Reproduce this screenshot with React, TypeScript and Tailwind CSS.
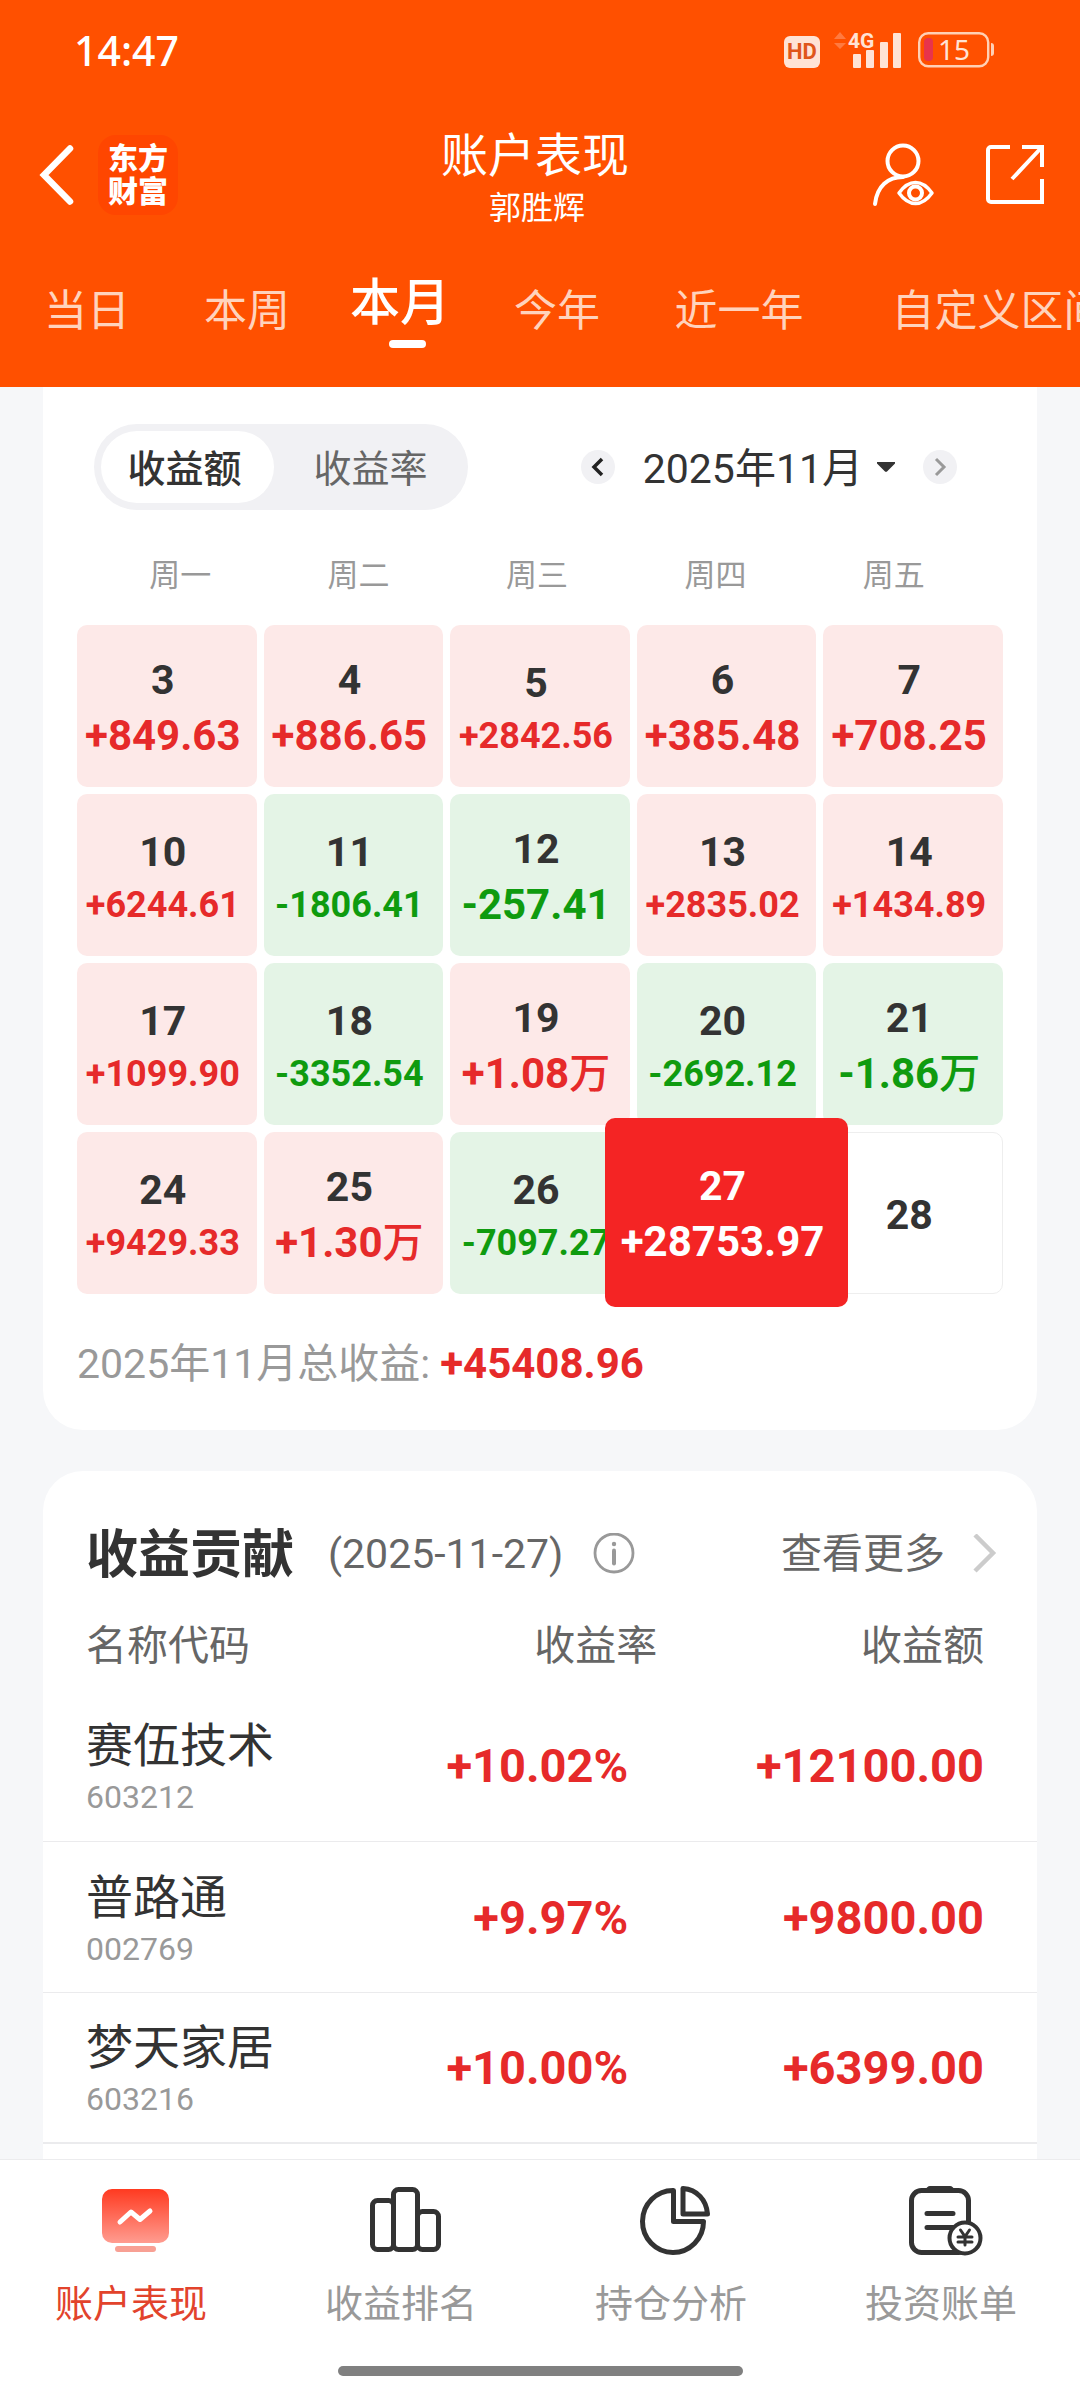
import React from "react";

type Tone = "up" | "down" | "none" | "selected";

interface Day {
  day: number;
  value?: string;
  unit?: string;
  tone: Tone;
}

const tabs = [
  { label: "当日", width: "w-[160px]" },
  { label: "本周", width: "w-[160px]" },
  { label: "本月", width: "w-[160px]", active: true },
  { label: "今年", width: "w-[140px]" },
  { label: "近一年", width: "w-[224px]" },
  { label: "自定义区间", width: "w-[296px]" },
];

const weekdays = ["周一", "周二", "周三", "周四", "周五"];

const days: Day[] = [
  { day: 3, value: "+849.63", tone: "up" },
  { day: 4, value: "+886.65", tone: "up" },
  { day: 5, value: "+2842.56", tone: "up" },
  { day: 6, value: "+385.48", tone: "up" },
  { day: 7, value: "+708.25", tone: "up" },
  { day: 10, value: "+6244.61", tone: "up" },
  { day: 11, value: "-1806.41", tone: "down" },
  { day: 12, value: "-257.41", tone: "down" },
  { day: 13, value: "+2835.02", tone: "up" },
  { day: 14, value: "+1434.89", tone: "up" },
  { day: 17, value: "+1099.90", tone: "up" },
  { day: 18, value: "-3352.54", tone: "down" },
  { day: 19, value: "+1.08", unit: "万", tone: "up" },
  { day: 20, value: "-2692.12", tone: "down" },
  { day: 21, value: "-1.86", unit: "万", tone: "down" },
  { day: 24, value: "+9429.33", tone: "up" },
  { day: 25, value: "+1.30", unit: "万", tone: "up" },
  { day: 26, value: "-7097.27", tone: "down" },
  { day: 27, value: "+28753.97", tone: "selected" },
  { day: 28, tone: "none" },
];

const stocks = [
  { name: "赛伍技术", code: "603212", rate: "+10.02%", amount: "+12100.00" },
  { name: "普路通", code: "002769", rate: "+9.97%", amount: "+9800.00" },
  { name: "梦天家居", code: "603216", rate: "+10.00%", amount: "+6399.00" },
];

const toneClass: Record<Tone, string> = {
  up: "bg-[#fde9e8] text-[#e62a2a]",
  down: "bg-[#e4f4e6] text-[#0f9b0f]",
  none: "border border-[#eeeeee] bg-white text-[#333333]",
  selected: "bg-[#f42424] text-white",
};

function StatusBar() {
  return (
    <div className="flex h-[100px] items-center justify-between pr-[86px] pl-[74px]">
      <span className="font-['Noto_Sans',sans-serif] text-[41px] leading-[48px] font-medium">14:47</span>
      <div className="flex items-center">
        <span className="mt-1 flex h-8 w-9 items-center justify-center rounded-md bg-[#ffe3d5] text-[22px] leading-8 font-bold text-[#e0561a]">
          HD
        </span>
        <svg className="ml-3.5 h-[38px] w-[68px] overflow-visible" viewBox="0 0 68 38" aria-hidden="true">
          <path d="M6 1l6 7H0zM6 18l6-6H0z" fill="#ff7a40" />
          <text x="14" y="17" fontSize="21" fontWeight="700" fontFamily="Roboto" fill="#ffe3d5">4G</text>
          <g fill="#ffe3d5">
            <rect x="19" y="23" width="8" height="14" rx="1" />
            <rect x="32" y="19" width="8" height="18" rx="1" />
            <rect x="46" y="11" width="8" height="26" rx="1" />
            <rect x="59" y="2" width="8" height="35" rx="1" />
          </g>
        </svg>
        <svg className="ml-4 h-[36px] w-[76px] overflow-visible" viewBox="0 0 76 36" aria-hidden="true">
          <rect x="1.2" y="1.2" width="69" height="33" rx="9" fill="none" stroke="#ffd0b5" strokeWidth="2.4" />
          <rect x="6" y="6" width="9" height="23" rx="4" fill="#e8344c" />
          <path d="M73 11a3 3 0 0 1 3 3v7a3 3 0 0 1-3 3z" fill="#ffd0b5" />
          <text x="36" y="28" textAnchor="middle" fontSize="28" fontFamily="Noto Sans" fill="#ffe3d5">15</text>
        </svg>
      </div>
    </div>
  );
}

function Header() {
  return (
    <header className="overflow-hidden bg-[#ff5000] text-white">
      <StatusBar />
      <div className="grid h-[150px] grid-cols-[1fr_auto_1fr] items-center pr-9 pl-[38px]">
        <div className="flex items-center gap-6">
          <button type="button" aria-label="返回">
            <svg className="h-[62px] w-9" viewBox="0 0 36 62" fill="none" stroke="#fff" strokeWidth="6.500" strokeLinecap="round">
              <path d="M32 4.500L6 31l26 26.500" strokeLinejoin="miter" />
            </svg>
          </button>
          <div className="flex h-20 w-20 flex-col items-center justify-center rounded-[18px] bg-[#ff4600] text-[30px] leading-[33px] font-black">
            <span>东方</span>
            <span>财富</span>
          </div>
        </div>
        <div className="pt-2.5 pr-3 text-center">
          <h1 className="text-[47px] leading-[56px]">账户表现</h1>
          <p className="pl-1 text-[32px] leading-[48px]">郭胜辉</p>
        </div>
        <div className="flex items-center justify-end gap-[50px]">
          <button type="button" aria-label="查看账户">
            <svg className="h-16 w-[64px]" viewBox="0 0 64 64" fill="none" stroke="#fff" strokeWidth="4" strokeLinecap="round">
              <circle cx="31" cy="18" r="15.500" />
              <path d="M3 61C5 43 16 34 31 34" />
              <path d="M27 50c10-14 23-14 33 0-10 14-23 14-33 0z" strokeWidth="3.500" strokeLinejoin="round" />
              <circle cx="43.500" cy="50" r="6.500" />
            </svg>
          </button>
          <button type="button" aria-label="分享">
            <svg className="h-[60px] w-[58px]" viewBox="0 0 58 60" fill="none" stroke="#fff" strokeWidth="4">
              <path d="M24 2H5a3 3 0 0 0-3 3v49a3 3 0 0 0 3 3h51V34" />
              <path d="M36 2h20v20M56 2L26 34" />
            </svg>
          </button>
        </div>
      </div>
      <nav className="flex h-[137px] pl-[7px]">
        {tabs.map((tab) => (
          <button
            key={tab.label}
            type="button"
            className={`flex flex-none flex-col items-center ${tab.width} ${
              tab.active ? "pt-[26px] text-[50px] font-medium text-white" : "pt-[34px] text-[43px] text-[#ffd3bd]"
            }`}
          >
            <span className={`leading-[54px] whitespace-nowrap ${tab.active ? "pr-3.5" : ""}`}>{tab.label}</span>
            {tab.active && <span className="mt-2.5 h-2 w-[37px] rounded-full bg-white" />}
          </button>
        ))}
      </nav>
    </header>
  );
}

function CalendarToolbar() {
  return (
    <div className="flex items-center justify-between pt-[37px] pr-20 pl-[51px]">
      <div className="flex rounded-full bg-[#f1f1f4] p-[7px] text-[38px] leading-[68px]">
        <button type="button" className="w-[173px] rounded-full bg-white pt-1 pr-1.5 text-center font-medium text-[#333333]">
          收益额
        </button>
        <button type="button" className="w-[187px] pt-1 pl-1.5 text-center text-[#666666]">
          收益率
        </button>
      </div>
      <div className="flex items-center">
        <button type="button" aria-label="上个月" className="flex h-[34px] w-[34px] items-center justify-center rounded-full bg-[#f1f1f4]">
          <svg className="h-5 w-4" viewBox="0 0 16 20" fill="none" stroke="#222" strokeWidth="3.500">
            <path d="M12 2L4 10l8 8" />
          </svg>
        </button>
        <button type="button" className="mr-7 ml-7 flex items-center gap-3.5 text-[41px] leading-[56px] text-[#333333]">
          <span className="pt-1">2025年11月</span>
          <svg className="h-[10px] w-[18px]" viewBox="0 0 18 10" fill="#333">
            <path d="M0 0h18v1.500L10.500 9a2 2 0 0 1-3 0L0 1.500z" />
          </svg>
        </button>
        <button type="button" aria-label="下个月" className="flex h-[34px] w-[34px] items-center justify-center rounded-full bg-[#f1f1f4]">
          <svg className="h-5 w-4" viewBox="0 0 16 20" fill="none" stroke="#999" strokeWidth="3">
            <path d="M4 2l8 8-8 8" />
          </svg>
        </button>
      </div>
    </div>
  );
}

function DayText({ item }: { item: Day }) {
  const small = item.tone !== "selected" && (item.value ?? "").length > 7;
  return (
    <>
      <span className={`text-[41px] leading-[56px] ${item.tone === "selected" ? "text-white" : "text-[#333333]"}`}>
        {item.day}
      </span>
      {item.value && (
        <span className={small ? "text-[36px] leading-[50px]" : "text-[42px] leading-[56px]"}>
          {item.value}
          {item.unit && <span className="text-[41px] font-medium">{item.unit}</span>}
        </span>
      )}
    </>
  );
}

function DayCell({ item }: { item: Day }) {
  const base = "flex flex-col items-center justify-center rounded-[10px] pt-[3px] pr-2 font-bold whitespace-nowrap";
  if (item.tone === "selected") {
    return (
      <div className="relative">
        <button type="button" className={`absolute -inset-x-8 -top-[14px] -bottom-[13px] ${base} ${toneClass.selected}`}>
          <DayText item={item} />
        </button>
      </div>
    );
  }
  return (
    <button type="button" className={`min-w-0 ${base} ${toneClass[item.tone]}`}>
      <DayText item={item} />
    </button>
  );
}

function CalendarCard() {
  return (
    <section className="mx-[43px] rounded-b-[40px] bg-white">
      <CalendarToolbar />
      <div className="grid h-[115px] grid-cols-5 items-center pt-4 pr-[54px] pl-12 text-center text-[31px] leading-10 text-[#999999]">
        {weekdays.map((d) => (
          <span key={d}>{d}</span>
        ))}
      </div>
      <div className="grid auto-rows-[162px] grid-cols-5 gap-[7px] px-[34px]">
        {days.map((d) => (
          <DayCell key={d.day} item={d} />
        ))}
      </div>
      <p className="flex h-[136px] items-center gap-2.5 px-[34px] pt-1 text-[41px] leading-[56px] text-[#999999]">
        2025年11月总收益:
        <strong className="text-[42px] font-bold text-[#e62a2a]">+45408.96</strong>
      </p>
    </section>
  );
}

function ContributionCard() {
  return (
    <section className="mx-[43px] mt-[41px] flex-1 rounded-t-[40px] bg-white pt-[55px]">
      <div className="flex h-14 items-center pr-10 pl-[43px] text-[41px] leading-[56px] text-[#666666]">
        <h2 className="pt-1 text-[52px] font-bold text-[#333333]">收益贡献</h2>
        <span className="ml-[34px]">(2025-11-27)</span>
        <button type="button" aria-label="说明" className="ml-[30px]">
          <svg className="h-[42px] w-[42px]" viewBox="0 0 42 42" fill="none" stroke="#999" strokeWidth="2.800">
            <circle cx="21" cy="20" r="19" />
            <path d="M21 17.500v13" strokeWidth="4" strokeLinecap="round" />
            <circle cx="21" cy="11" r="2.200" fill="#999" stroke="none" />
          </svg>
        </button>
        <a href="#more" className="ml-auto flex items-center gap-7">
          查看更多
          <svg className="h-10 w-6" viewBox="0 0 24 40" fill="none" stroke="#ccc" strokeWidth="4.500">
            <path d="M2 1l18 18L2 37" />
          </svg>
        </a>
      </div>
      <table className="w-full table-fixed">
        <thead>
          <tr className="h-[108px] text-[41px] leading-[56px] text-[#666666]">
            <th className="w-[31%] pt-5 pl-[43px] text-left font-normal">名称代码</th>
            <th className="w-[31%] pt-5 pr-0.5 text-right font-normal">收益率</th>
            <th className="w-[38%] pt-5 pr-[53px] text-right font-normal">收益额</th>
          </tr>
        </thead>
        <tbody>
          {stocks.map((s) => (
            <tr key={s.code} className="h-[151px] border-b border-[#ebebed] last:border-b-2">
              <td className="pt-2 pl-[43px]">
                <div className="text-[47px] leading-[56px] text-[#333333]">{s.name}</div>
                <div className="text-[32px] leading-[46px] text-[#999999]">{s.code}</div>
              </td>
              <td className="pt-0.5 pr-[31px] text-right text-[47px] leading-[56px] font-bold text-[#e62a2a]">{s.rate}</td>
              <td className="pt-0.5 pr-[53px] text-right text-[47px] leading-[56px] font-bold text-[#e62a2a]">{s.amount}</td>
            </tr>
          ))}
        </tbody>
      </table>
    </section>
  );
}

function PerformanceIcon() {
  return (
    <svg className="h-[72px] w-[76px]" viewBox="0 0 76 72" fill="none">
      <defs>
        <linearGradient id="screen" x1="0" y1="0" x2="0" y2="1">
          <stop offset="0" stopColor="#ff3a20" />
          <stop offset="1" stopColor="#ff9c90" />
        </linearGradient>
      </defs>
      <rect x="5" y="5" width="67" height="54" rx="10" fill="url(#screen)" />
      <path d="M23 38l11-10 9 7.500L53 27" stroke="#fff" strokeWidth="5" strokeLinecap="round" strokeLinejoin="round" />
      <rect x="18" y="62" width="41" height="6" rx="3" fill="#f8a094" />
    </svg>
  );
}

function RankIcon() {
  return (
    <svg className="h-[72px] w-[76px]" viewBox="0 0 76 72" fill="none" stroke="#333" strokeWidth="5">
      <rect x="5.500" y="16.500" width="21" height="49" rx="5" />
      <rect x="26.500" y="5.500" width="24" height="60" rx="5" />
      <rect x="50.500" y="27.500" width="21" height="38" rx="5" />
    </svg>
  );
}

function PieIcon() {
  return (
    <svg className="h-[72px] w-[76px]" viewBox="0 0 76 72" fill="none" stroke="#333" strokeWidth="5" strokeLinejoin="round">
      <path d="M36.500 6.500V37.500h30a30.500 31 0 1 1-30-31z" />
      <path d="M46 4.500v25.500h24.500C69.500 16 60 5.500 46 4.500z" />
    </svg>
  );
}

function BillIcon() {
  return (
    <svg className="h-[72px] w-[76px]" viewBox="0 0 76 72" fill="none" stroke="#333" strokeWidth="5" strokeLinecap="round">
      <rect x="4.500" y="6.500" width="57" height="62" rx="10" />
      <path d="M23 3h20c2 0 3 1.500 4 4H19c1-2.500 2-4 4-4z" fill="#333" strokeWidth="2" />
      <path d="M20 29.500h26M20 43.500h26" strokeWidth="5" />
      <circle cx="58" cy="54" r="15.500" fill="#fff" strokeWidth="4" />
      <path d="M53.500 46l4.500 6.500 4.500-6.500M58 52.500V61M51 53h14M51 58h14" strokeWidth="3" />
    </svg>
  );
}

const navItems = [
  { label: "账户表现", Icon: PerformanceIcon, active: true },
  { label: "收益排名", Icon: RankIcon },
  { label: "持仓分析", Icon: PieIcon },
  { label: "投资账单", Icon: BillIcon },
];

function BottomNav() {
  return (
    <footer className="border-t border-[#ececee] bg-white pb-6">
      <nav className="grid grid-cols-4 pt-6">
        {navItems.map(({ label, Icon, active }) => (
          <button
            key={label}
            type="button"
            className={`flex flex-col items-center text-[38px] ${active ? "text-[#e2432c]" : "text-[#999999]"}`}
          >
            <Icon />
            <span className="mt-5 pr-2 leading-[56px]">{label}</span>
          </button>
        ))}
      </nav>
      <div className="mx-auto mt-[34px] h-[10px] w-[405px] rounded-full bg-[#808080]" />
    </footer>
  );
}

export default function App() {
  return (
    <div className="flex min-h-screen flex-col bg-[#f6f7f9] font-['Roboto','Noto_Sans_CJK_SC',sans-serif]">
      <Header />
      <main className="flex flex-1 flex-col">
        <CalendarCard />
        <ContributionCard />
      </main>
      <BottomNav />
    </div>
  );
}
